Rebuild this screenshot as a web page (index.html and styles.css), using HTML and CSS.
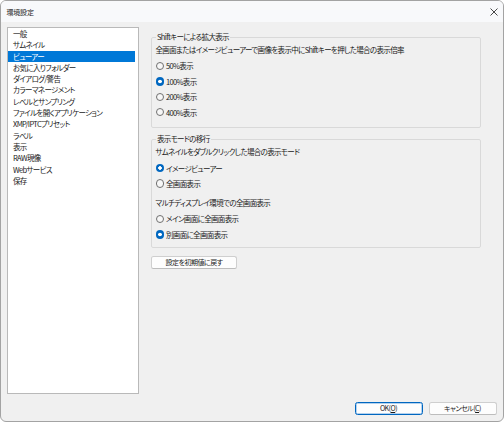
FILE: index.html
```html
<!DOCTYPE html>
<html lang="ja">
<head>
<meta charset="utf-8">
<title>環境設定</title>
<link rel="stylesheet" href="styles.css">
</head>
<body>
<div class="window">
  <div class="titlebar">
    <span class="title">環境設定</span>
    <span class="close"><svg width="8" height="8" viewBox="0 0 8 8"><path d="M0.5 0.5 L7.5 7.5 M7.5 0.5 L0.5 7.5" stroke="#333" stroke-width="0.9" fill="none"/></svg></span>
  </div>
  <div class="main">
    <ul class="listbox">
      <li>一般</li>
      <li>サムネイル</li>
      <li class="selected">ビューアー</li>
      <li>お気に入りフォルダー</li>
      <li>ダイアログ/警告</li>
      <li>カラーマネージメント</li>
      <li>レベルとサンプリング</li>
      <li>ファイルを開くアプリケーション</li>
      <li>XMP/IPTCプリセット</li>
      <li>ラベル</li>
      <li>表示</li>
      <li>RAW現像</li>
      <li>Webサービス</li>
      <li>保存</li>
    </ul>
    <div class="panel">
      <fieldset class="group g1">
        <legend>Shiftキーによる拡大表示</legend>
        <div class="desc">全画面またはイメージビューアーで画像を表示中にShiftキーを押した場合の表示倍率</div>
        <div class="radio"><span class="dot"></span>50%表示</div>
        <div class="radio"><span class="dot on"></span>100%表示</div>
        <div class="radio"><span class="dot"></span>200%表示</div>
        <div class="radio"><span class="dot"></span>400%表示</div>
      </fieldset>
      <fieldset class="group g2">
        <legend>表示モードの移行</legend>
        <div class="desc">サムネイルをダブルクリックした場合の表示モード</div>
        <div class="radio"><span class="dot on"></span>イメージビューアー</div>
        <div class="radio"><span class="dot"></span>全画面表示</div>
        <div class="desc desc2">マルチディスプレイ環境での全画面表示</div>
        <div class="radio"><span class="dot"></span>メイン画面に全画面表示</div>
        <div class="radio"><span class="dot on"></span>別画面に全画面表示</div>
      </fieldset>
      <button class="btn reset">設定を初期値に戻す</button>
    </div>
  </div>
  <div class="footer">
    <button class="btn ok">OK(<u>O</u>)</button>
    <button class="btn">キャンセル(<u>C</u>)</button>
  </div>
</div>
</body>
</html>
```
FILE: styles.css
```css
html, body {
  margin: 0;
  padding: 0;
  background: #ffffff;
}
body {
  font-family: "Noto Sans CJK JP", "Noto Sans", sans-serif;
  font-feature-settings: "palt";
  font-size: 7.5px;
  letter-spacing: -0.65px;
  color: #1a1a1a;
}
.window {
  box-sizing: border-box;
  width: 504px;
  height: 422px;
  border: 1px solid #a3a3a3;
  border-radius: 6px;
  background: #f0f0f0;
  display: flex;
  flex-direction: column;
  overflow: hidden;
}
.titlebar {
  height: 21px;
  flex: 0 0 21px;
  background: #f8f9fb;
  display: flex;
  align-items: center;
  justify-content: space-between;
  padding: 0 5px 0 5.5px;
}
.title {
  font-size: 7px;
  line-height: 10px;
  padding-top: 1.5px;
  letter-spacing: -0.2px;
}
.close {
  display: flex;
  padding-top: 1.5px;
}
.main {
  flex: 0 0 372px;
  display: flex;
  align-items: flex-start;
}
.listbox {
  list-style: none;
  margin: 5px 0 0 6px;
  padding: 0;
  box-sizing: border-box;
  width: 132px;
  height: 367px;
  background: #ffffff;
  border: 1px solid #b9b9b9;
}
.listbox li {
  height: 11.3px;
  line-height: 11.3px;
  padding-left: 5px;
  margin-right: 3px;
  white-space: nowrap;
}
.listbox li.selected {
  background: #0078d7;
  color: #ffffff;
}
.panel {
  margin: 10.3px 0 0 12px;
  width: 330px;
  display: flex;
  flex-direction: column;
  align-items: flex-start;
}
.group {
  box-sizing: border-box;
  width: 330px;
  margin: 0;
  border: 1px solid #d9d9d9;
  border-radius: 2px;
  padding: 2.5px 3.5px 7px 3.5px;
  min-width: 0;
}
.group legend {
  padding: 0 1.5px;
  line-height: 10px;
  height: 10px;
}
.g2 {
  margin-top: 6.5px;
  padding-bottom: 5px;
}
.desc {
  line-height: 10px;
  height: 10px;
  margin-bottom: 3.5px;
  white-space: nowrap;
}
.desc2 {
  margin-top: 6.6px;
}
.radio {
  height: 15.4px;
  display: flex;
  align-items: center;
  white-space: nowrap;
}
.dot {
  box-sizing: border-box;
  width: 8.5px;
  height: 8.5px;
  border-radius: 50%;
  border: 1px solid #707070;
  background: #f7f7f7;
  margin-right: 2px;
  flex: 0 0 8.5px;
}
.dot.on {
  border: none;
  background: radial-gradient(circle, #ffffff 0 1.5px, #0067c0 2.1px);
}
.btn {
  font-family: inherit;
  font-feature-settings: "palt";
  font-size: 7px;
  letter-spacing: -0.5px;
  color: #1a1a1a;
  background: #fdfdfd;
  border: 1px solid #cfcfcf;
  border-bottom-color: #bdbdbd;
  border-radius: 2.5px;
  height: 12.6px;
  padding: 0;
  line-height: 10px;
  box-sizing: border-box;
}
.reset {
  margin-top: 8px;
  width: 86px;
}
.footer {
  flex: 1;
  display: flex;
  justify-content: flex-end;
  align-items: flex-start;
  gap: 6px;
  padding: 8px 6.5px 0 0;
}
.footer .btn {
  width: 68px;
}
.ok {
  border: 1px solid #0067c0;
  box-shadow: inset 0 0 0 0.5px #6aa6e0;
}
u {
  text-underline-offset: 1px;
}
```
